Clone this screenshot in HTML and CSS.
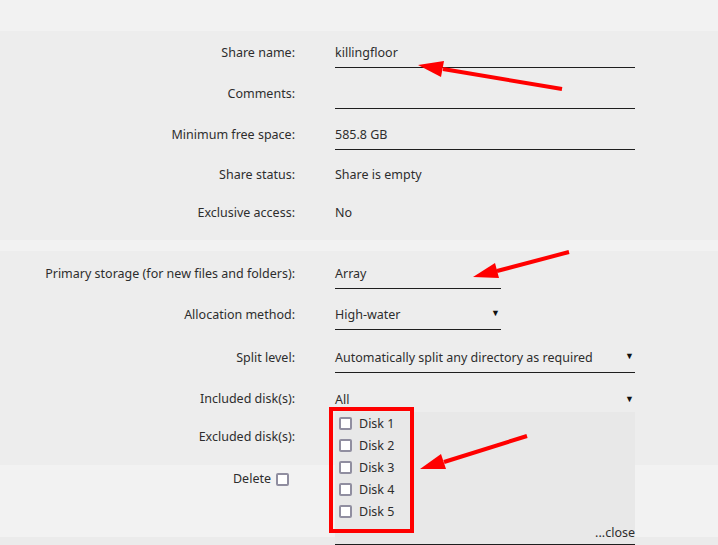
FILE: index.html
```html
<!DOCTYPE html>
<html lang="en">
<head>
    <meta charset="UTF-8">
    <meta name="viewport" content="width=device-width, initial-scale=1.0">
    <title>Share settings</title>
    <link rel="stylesheet" href="styles.css">
</head>
<body>
    <div class="page">
        <div class="block first">
            <div class="form">
                <div class="label">Share name:</div>
                <div class="field"><div class="input">killingfloor</div></div>

                <div class="label">Comments:</div>
                <div class="field"><div class="input"></div></div>

                <div class="label">Minimum free space:</div>
                <div class="field"><div class="input">585.8 GB</div></div>

                <div class="label short">Share status:</div>
                <div class="field text">Share is empty</div>

                <div class="label short">Exclusive access:</div>
                <div class="field text">No</div>
            </div>
        </div>

        <div class="block second">
            <div class="form">
                <div class="label">Primary storage (for new files and folders):</div>
                <div class="field"><div class="input select narrow">Array</div></div>

                <div class="label">Allocation method:</div>
                <div class="field"><div class="input select narrow">High-water</div></div>

                <div class="label push">Split level:</div>
                <div class="field push"><div class="input select">Automatically split any directory as required</div></div>

                <div class="label">Included disk(s):</div>
                <div class="field dropdown">
                    <div class="input select open">All</div>
                    <div class="options">
                        <label class="option"><span class="check"></span>Disk 1</label>
                        <label class="option"><span class="check"></span>Disk 2</label>
                        <label class="option"><span class="check"></span>Disk 3</label>
                        <label class="option"><span class="check"></span>Disk 4</label>
                        <label class="option"><span class="check"></span>Disk 5</label>
                        <span class="close">...close</span>
                    </div>
                </div>

                <div class="label pull">Excluded disk(s):</div>
                <div class="field pull"></div>
            </div>
        </div>

        <div class="actions">
            <div class="delete">Delete <span class="check"></span></div>
        </div>

        <div class="block last"></div>

        <!-- annotations drawn over the screenshot -->
        <div class="mark"></div>
        <svg class="notes" width="718" height="545" viewBox="0 0 718 545">
            <line x1="562" y1="89" x2="443" y2="69" />
            <polygon points="418,65 444,61 441,77" />
            <line x1="569" y1="252" x2="497" y2="271" />
            <polygon points="473,277 495,263 499,278" />
            <line x1="527" y1="436" x2="444" y2="462" />
            <polygon points="420,469 441,454 446,469" />
        </svg>
    </div>
</body>
</html>
```

FILE: styles.css
```css
body {
    margin: 0;
    background-color: #f2f2f2;
    color: #2d2d2d;
    font-family: "Noto Sans", "Open Sans", sans-serif;
    font-size: 12.5px;
}

.page {
    position: relative;
    width: 718px;
    height: 545px;
    overflow: hidden;
    padding-top: 31px;
    box-sizing: border-box;
}

.block {
    background-color: #ededed;
}

.block.first {
    padding: 7px 0 14px;
    margin-bottom: 11px;
}

.block.second {
    padding: 8px 0 13px;
}

.block.last {
    height: 20px;
    background-color: #ebebeb;
}

.form {
    display: grid;
    grid-template-columns: 295px 300px;
    column-gap: 40px;
    row-gap: 11px;
}

.push {
    margin-top: 2px;
}

.pull {
    margin-top: -3px;
}

.label {
    text-align: right;
    line-height: 30px;
    height: 30px;
}

.label.short {
    line-height: 27px;
    height: 27px;
}

.field {
    min-height: 27px;
}

.field.text {
    line-height: 27px;
    height: 27px;
}

.input {
    height: 30px;
    line-height: 29px;
    box-sizing: border-box;
    border-bottom: 1px solid #1e1e1e;
    width: 300px;
}

.input.narrow {
    width: 166px;
}

.select {
    display: flex;
    justify-content: space-between;
}

.select::after {
    content: "\25BC";
    font-size: 9px;
    line-height: 26px;
    color: #111;
    padding-right: 1px;
}

.input.open {
    border-bottom: none;
    padding-top: 2px;
    line-height: 28px;
}

.dropdown {
    position: relative;
}

.options {
    position: absolute;
    top: 28px;
    left: 0;
    width: 300px;
    height: 133px;
    box-sizing: border-box;
    padding: 0 4px;
    background-color: #e8e8e8;
    border-bottom: 1px solid #1e1e1e;
    z-index: 2;
}

.option {
    display: flex;
    align-items: center;
    gap: 7px;
    height: 22px;
}

.check {
    display: inline-block;
    width: 13px;
    height: 13px;
    box-sizing: border-box;
    border: 2px solid #908ea0;
    border-radius: 2px;
    background-color: #fff;
}

.close {
    position: absolute;
    right: 0;
    bottom: 3px;
    line-height: 16px;
}

.actions {
    height: 72px;
    box-sizing: border-box;
}

.delete {
    width: 289px;
    display: flex;
    justify-content: flex-end;
    align-items: center;
    gap: 5px;
    line-height: 28px;
}

.mark {
    position: absolute;
    left: 329px;
    top: 407px;
    width: 85px;
    height: 126px;
    box-sizing: border-box;
    border: 4px solid #f00;
    z-index: 3;
}

.notes {
    position: absolute;
    left: 0;
    top: 0;
    z-index: 4;
}

.notes line {
    stroke: #f00;
    stroke-width: 4;
}

.notes polygon {
    fill: #f00;
}
```
